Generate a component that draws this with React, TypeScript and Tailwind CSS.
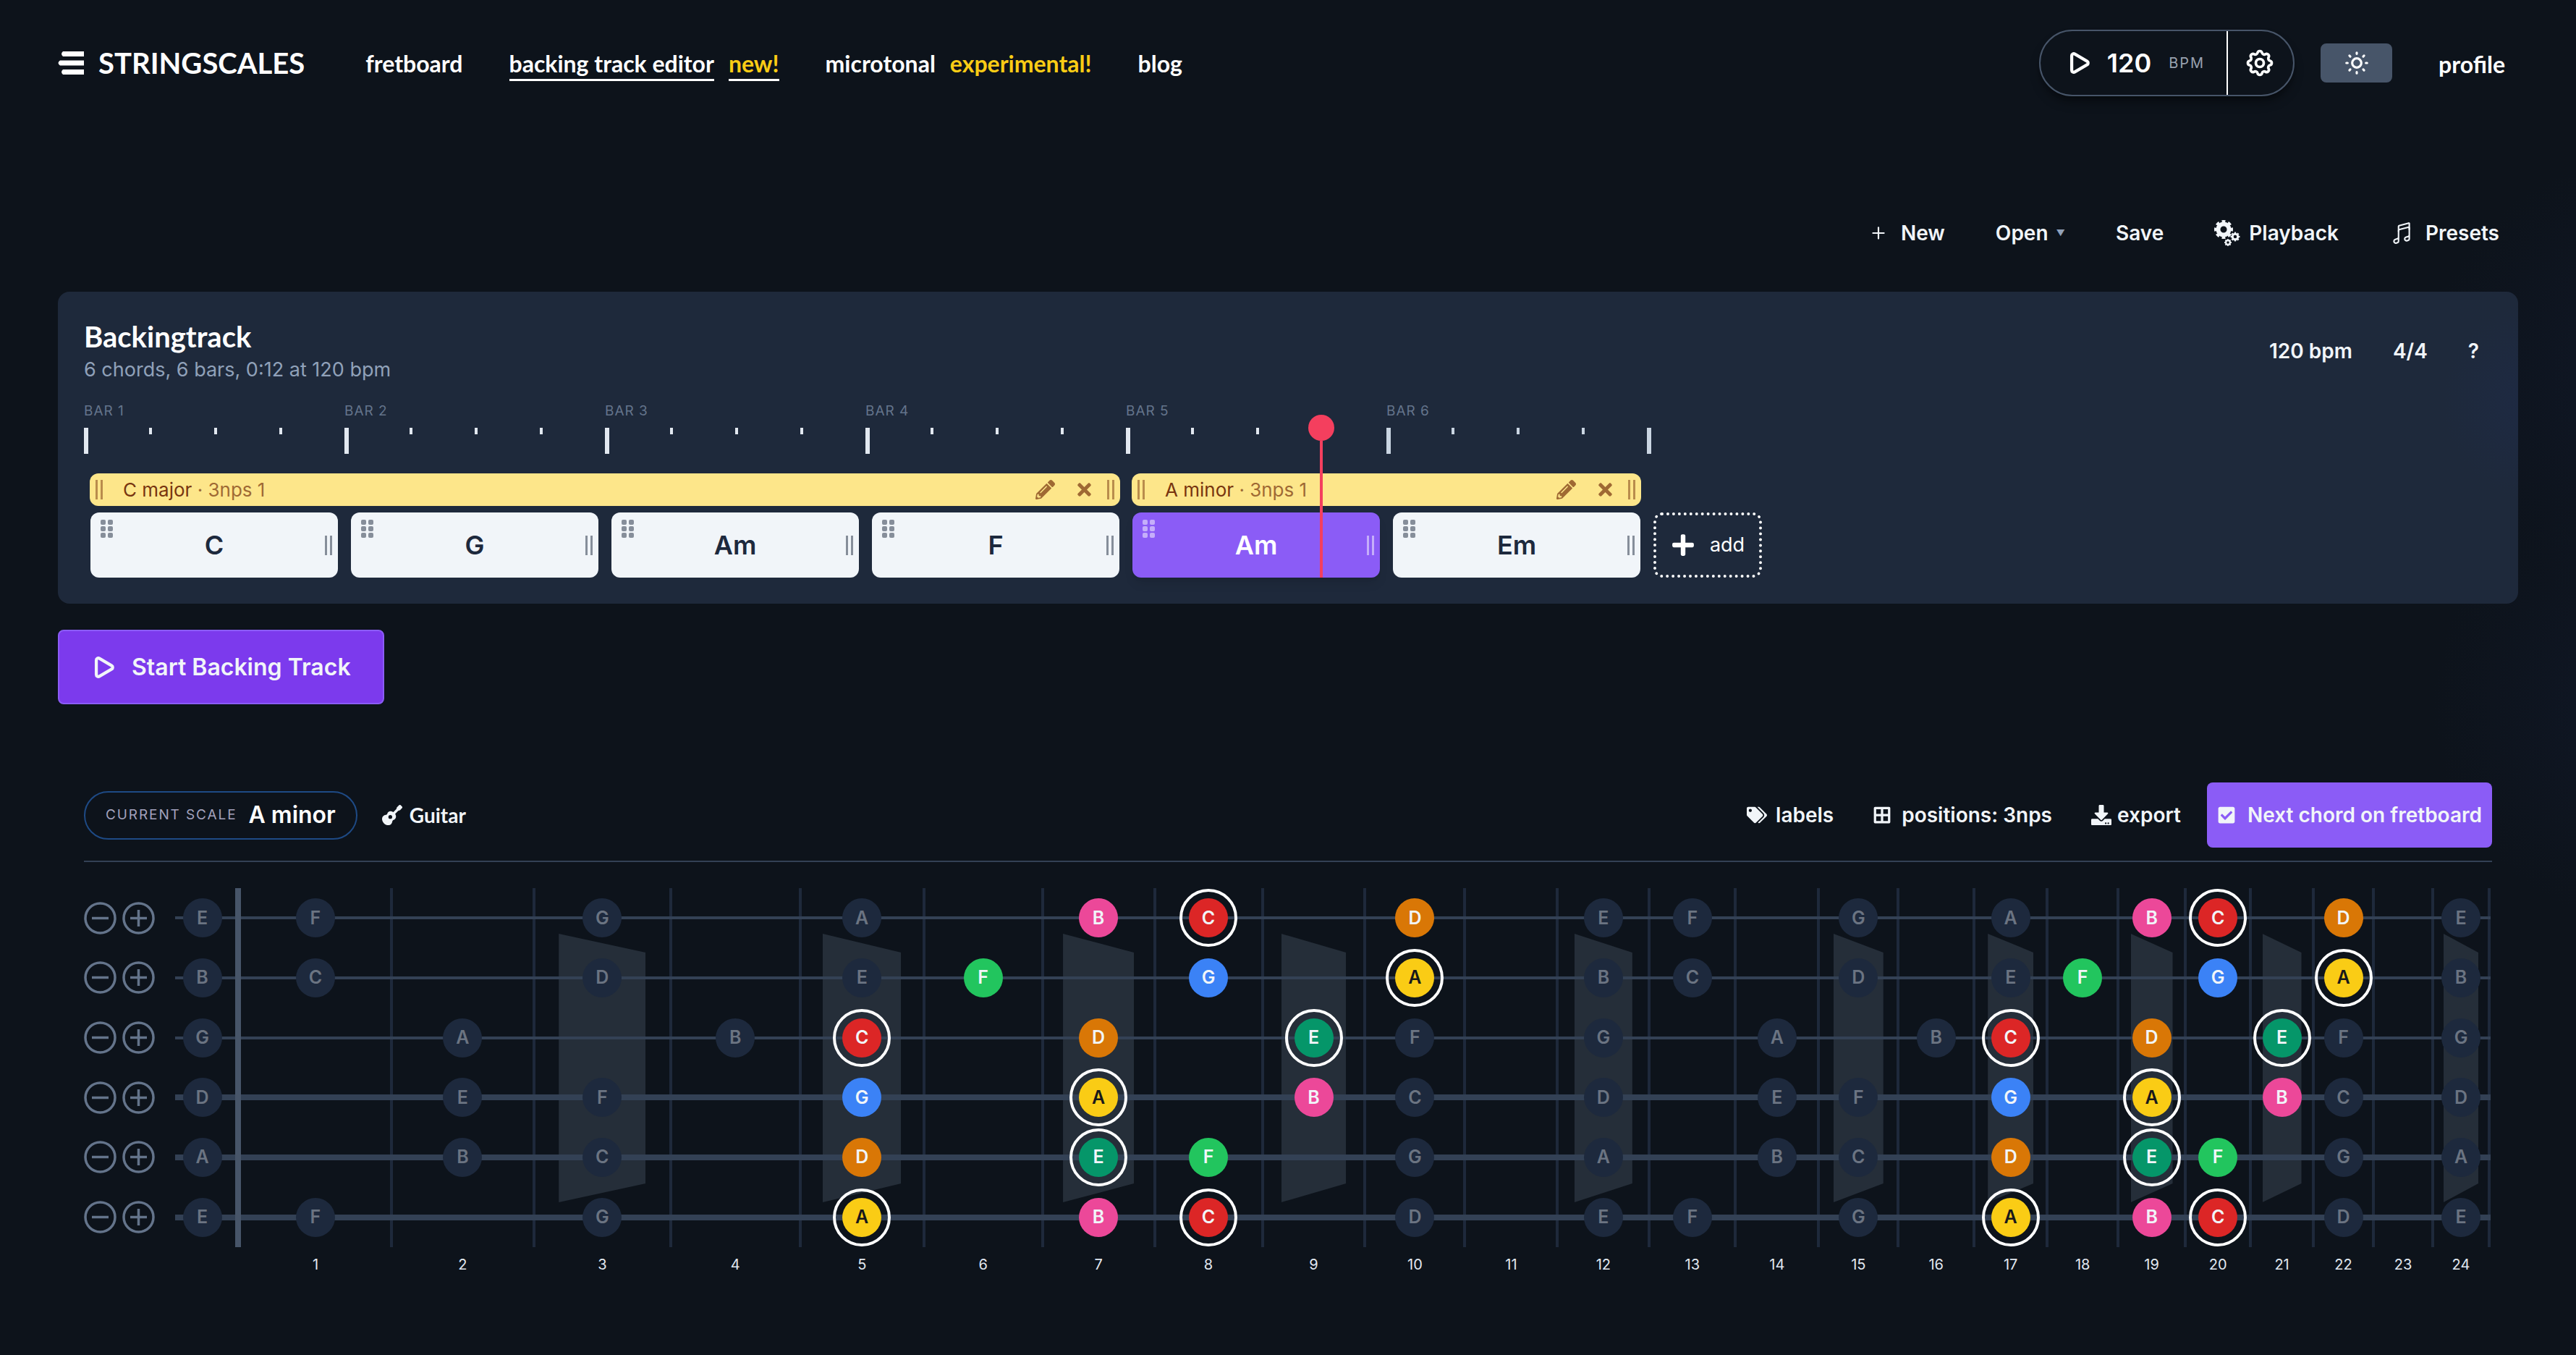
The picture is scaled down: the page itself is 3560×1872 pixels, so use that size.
import { useState } from "react";
import clsx from "clsx";
import { Play, Plus } from "lucide-react";
import {
  FaBorderAll,
  FaCheckSquare,
  FaDownload,
  FaGuitar,
  FaPencilAlt,
  FaPlus,
  FaTags,
  FaTimes,
} from "react-icons/fa";
import { HiOutlineCog, HiOutlineSun } from "react-icons/hi";
import { IoMusicalNotesOutline } from "react-icons/io5";

const BAR_WIDTH = 360;
const PLAYHEAD_BEAT = 19;

const chords = ["C", "G", "Am", "F", "Am", "Em"];
const activeChord = 4;

const scales = [
  { name: "C major", position: "3nps 1", bars: 4 },
  { name: "A minor", position: "3nps 1", bars: 2 },
];

const noteNames = ["C", "", "D", "", "E", "F", "", "G", "", "A", "", "B"];

const noteColors: Record<string, string> = {
  A: "bg-[#facc15] text-[#18181b]",
  B: "bg-[#ec4899] text-slate-100",
  C: "bg-[#dc2626] text-slate-100",
  D: "bg-[#d97706] text-slate-100",
  E: "bg-[#059669] text-slate-100",
  F: "bg-[#22c55e] text-slate-100",
  G: "bg-[#3b82f6] text-slate-100",
};

// open = semitones above C, active = frets that are part of the position
const strings = [
  { open: 4, thick: false, active: [7, 8, 10, 19, 20, 22] },
  { open: 11, thick: false, active: [6, 8, 10, 18, 20, 22] },
  { open: 7, thick: false, active: [5, 7, 9, 17, 19, 21] },
  { open: 2, thick: true, active: [5, 7, 9, 17, 19, 21] },
  { open: 9, thick: true, active: [5, 7, 8, 17, 19, 20] },
  { open: 4, thick: true, active: [5, 7, 8, 17, 19, 20] },
];

const chordTones = ["A", "C", "E"];
const markers = [3, 5, 7, 9, 12, 15, 17, 19, 21, 24];

const fretWidths = [
  210, 197, 189, 179, 171, 164, 155, 149, 142, 138, 128, 127, 119, 115, 110,
  105, 101, 98, 93, 90, 87, 83, 82, 78,
];

function Logo() {
  return (
    <a href="#" className="flex items-center gap-5 text-[40px] leading-[48px] font-bold">
      <svg width="36" height="32" viewBox="0 0 36 32" fill="currentColor" aria-hidden="true">
        <path d="M7 0H36V7H7Q3 3.500 7 0Z" />
        <path d="M3 12.500H36V19.500H3Q-2 16 3 12.500Z" />
        <path d="M7 25H36V32H7Q3 28.500 7 25Z" />
      </svg>
      STRINGSCALES
    </a>
  );
}

function Header() {
  return (
    <header className="flex items-center pt-[41px] pl-20 pr-[98px] font-['Lato',sans-serif] text-white">
      <Logo />
      <nav className="ml-[84px] flex items-baseline gap-16 pt-1 text-[32px] leading-[42px] font-bold">
        <a href="#">fretboard</a>
        <a href="#" className="flex items-baseline gap-5">
          <span className="border-b-[3px] border-white">backing track editor</span>
          <span className="border-b-[3px] border-white text-[#facc15]">new!</span>
        </a>
        <a href="#" className="flex items-baseline gap-5">
          <span>microtonal</span>
          <span className="text-[#facc15]">experimental!</span>
        </a>
        <a href="#">blog</a>
      </nav>
      <div className="ml-auto flex items-center">
        <div className="flex h-[92px] items-stretch rounded-full border-2 border-[#475569] font-['Inter',sans-serif] shadow-lg shadow-black/40">
          <button className="flex items-center pl-9 pr-[30px]">
            <Play size={34} strokeWidth={3} />
            <span className="ml-[22px] text-[36px] font-semibold">120</span>
            <span className="ml-6 text-xl tracking-widest text-gray-400">BPM</span>
          </button>
          <button
            aria-label="Metronome settings"
            className="flex items-center border-l-2 border-white pr-6 pl-[22px]"
          >
            <HiOutlineCog size={44} />
          </button>
        </div>
        <button
          aria-label="Toggle theme"
          className="ml-9 flex h-[54px] w-[99px] items-center justify-center rounded-lg bg-[#475569]"
        >
          <HiOutlineSun size={38} />
        </button>
        <a href="#" className="ml-16 pt-1 text-[32px] font-bold">
          profile
        </a>
      </div>
    </header>
  );
}

function Gear({ cx, cy, r }: { cx: number; cy: number; r: number }) {
  return (
    <g fill="none" stroke="currentColor">
      <circle cx={cx} cy={cy} r={r * 0.58} strokeWidth={r * 0.46} />
      <circle
        cx={cx}
        cy={cy}
        r={r * 0.88}
        strokeWidth={r * 0.24}
        pathLength={16}
        strokeDasharray="1.100 0.900"
        strokeDashoffset={0.55}
      />
    </g>
  );
}

function GearsIcon() {
  return (
    <svg width="36" height="36" viewBox="0 0 36 36" aria-hidden="true">
      <Gear cx={13} cy={13} r={13} />
      <Gear cx={29} cy={23} r={6.5} />
      <Gear cx={19} cy={31} r={5} />
    </svg>
  );
}

function Toolbar() {
  return (
    <div className="mt-[153px] flex h-[72px] justify-end pr-[106px] text-[28px] font-semibold text-slate-100">
      <button className="flex items-center gap-[18px] px-[35px]">
        <Plus size={26} />
        New
      </button>
      <button className="flex items-center gap-[11px] px-[35px]">
        Open
        <span className="text-[12px] text-slate-400">▼</span>
      </button>
      <button className="px-[35px]">Save</button>
      <button className="flex items-center gap-3 px-[35px]">
        <GearsIcon />
        Playback
      </button>
      <button className="flex items-center gap-4 pl-[35px]">
        <IoMusicalNotesOutline size={34} />
        Presets
      </button>
    </div>
  );
}

function Grip({ className }: { className?: string }) {
  return (
    <span className={clsx("flex h-[27px] gap-1", className)}>
      <span className="w-[3px] bg-current" />
      <span className="w-[3px] bg-current" />
    </span>
  );
}

function DragDots() {
  return (
    <span className="absolute top-[10px] left-[14px] grid grid-cols-2 gap-x-[3px] gap-y-[2px] opacity-50">
      {[0, 1, 2, 3, 4, 5].map((i) => (
        <span key={i} className="size-[7px] rounded-[2px] bg-current" />
      ))}
    </span>
  );
}

function Ruler() {
  return (
    <div className="mt-[25px] flex">
      {chords.map((_, bar) => (
        <div key={bar} className="w-[360px]">
          <div className="text-[19px] leading-6 tracking-wider text-[#64748b]">
            BAR {bar + 1}
          </div>
          <div
            className={clsx(
              "mt-[11px] flex h-9 items-start",
              bar <= activeChord ? "text-slate-200" : "text-slate-300"
            )}
          >
            {[0, 1, 2, 3].map((beat) => (
              <div key={beat} className="h-full w-[90px]">
                <div className={clsx("bg-current", beat === 0 ? "h-9 w-[6px]" : "h-[9px] w-1")} />
              </div>
            ))}
          </div>
        </div>
      ))}
      <div className="h-9 w-[6px] self-end bg-slate-300" />
    </div>
  );
}

function Timeline() {
  return (
    <div className="relative">
      <Ruler />
      <div className="mt-[27px] flex">
        {scales.map((scale) => (
          <div key={scale.name} className="px-2" style={{ width: scale.bars * BAR_WIDTH }}>
            <div className="flex h-[45px] items-center rounded-xl bg-[#fde68a] px-2 text-[26px] text-[#78350f]">
              <Grip className="opacity-50" />
              <span className="ml-7">
                {scale.name} <span className="opacity-70">· {scale.position}</span>
              </span>
              <div className="ml-auto flex items-center opacity-70">
                <button aria-label="Edit scale">
                  <FaPencilAlt size={27} />
                </button>
                <button aria-label="Remove scale" className="ml-[27px]">
                  <FaTimes size={27} />
                </button>
              </div>
              <Grip className="ml-[18px] opacity-50" />
            </div>
          </div>
        ))}
      </div>
      <div className="mt-[9px] flex">
        {chords.map((chord, i) => (
          <div key={i} className="w-[360px] px-[9px]">
            <button
              className={clsx(
                "relative flex h-[90px] w-full items-center justify-center rounded-xl text-[36px] font-semibold",
                i === activeChord
                  ? "bg-[#8b5cf6] text-white shadow-lg"
                  : "bg-slate-100 text-slate-800"
              )}
            >
              <DragDots />
              {chord}
              <Grip className="absolute right-2 opacity-50" />
            </button>
          </div>
        ))}
        <button className="ml-[9px] flex h-[90px] w-[150px] items-center justify-center gap-5 rounded-xl border-4 border-dotted border-white text-[27px] text-white">
          <FaPlus size={34} />
          add
        </button>
      </div>
      <div
        className="absolute top-[17px] bottom-0 flex w-9 -translate-x-1/2 flex-col items-center"
        style={{ left: (PLAYHEAD_BEAT * BAR_WIDTH) / 4 }}
      >
        <div className="size-9 shrink-0 rounded-full bg-[#f43f5e]" />
        <div className="w-1 flex-1 bg-[#f43f5e]" />
      </div>
    </div>
  );
}

function BackingTrack() {
  return (
    <section className="mx-20 mt-[45px] rounded-2xl bg-[#1e293b] bg-[radial-gradient(circle_at_101%_35%,#1e2a44,transparent_4%)] p-9">
      <div className="flex justify-between">
        <div>
          <h1 className="font-['Lato',sans-serif] text-[40px] leading-[52px] font-bold text-white">
            Backingtrack
          </h1>
          <p className="text-[27px] leading-10 text-slate-400">
            6 chords, 6 bars, 0:12 at 120 bpm
          </p>
        </div>
        <div className="mr-[18px] flex h-[92px] items-center gap-14 text-[28px] font-semibold text-slate-100">
          <button>120 bpm</button>
          <button>4/4</button>
          <button aria-label="Help">?</button>
        </div>
      </div>
      <Timeline />
    </section>
  );
}

function TuningButton({ plus }: { plus?: boolean }) {
  return (
    <button aria-label={plus ? "Tune up" : "Tune down"}>
      <svg width="45" height="45" viewBox="0 0 45 45" fill="none" stroke="currentColor" strokeWidth="3.500">
        <circle cx="22.500" cy="22.500" r="20.500" />
        <path d="M11 22.500H34" />
        {plus && <path d="M22.500 11V34" />}
      </svg>
    </button>
  );
}

function Note({ semitone, active }: { semitone: number; active: boolean }) {
  const name = noteNames[semitone % 12];
  if (!name) return null;

  return (
    <span
      className={clsx(
        "relative z-10 flex size-[54px] shrink-0 items-center justify-center rounded-full text-[25px] font-semibold",
        active ? noteColors[name] : "bg-slate-800 text-[#6b7482]",
        active && chordTones.includes(name) && "outline-4 outline-offset-[9px] outline-white"
      )}
    >
      {name}
    </span>
  );
}

function FretColumn({ fret }: { fret: number }) {
  const open = fret === 0;

  return (
    <div>
      <div
        className={clsx(
          "relative grid h-[496px] grid-rows-6",
          open ? "border-r-8 border-[#475569]" : "border-r-4 border-[#1e293b]"
        )}
      >
        {markers.includes(fret) && (
          <div className="absolute inset-x-0 top-[63px] mx-auto h-[371px] w-[65%] bg-[#252e39] [clip-path:polygon(0_0,100%_7%,100%_93%,0_100%)]" />
        )}
        {strings.map((string, i) => (
          <div
            key={i}
            className={clsx("relative flex items-center justify-center", open && "pr-2")}
          >
            <div
              className={clsx(
                "absolute left-0 bg-[#334155]",
                open ? "right-0" : "-right-1",
                string.thick ? "h-2" : "h-1"
              )}
            />
            <Note semitone={string.open + fret} active={string.active.includes(fret)} />
          </div>
        ))}
      </div>
      <div className="mt-3 h-6 pr-1 text-center text-xl leading-6 text-slate-200">
        {!open && fret}
      </div>
    </div>
  );
}

function Fretboard() {
  const columns = "91px " + fretWidths.map((w) => `minmax(0, ${w}fr)`).join(" ");

  return (
    <div className="mt-9 flex gap-7 pr-[2px]">
      <div className="grid h-[496px] grid-rows-6 text-[#64748b]">
        {strings.map((_, i) => (
          <div key={i} className="flex items-center gap-2">
            <TuningButton />
            <TuningButton plus />
          </div>
        ))}
      </div>
      <div className="grid flex-1" style={{ gridTemplateColumns: columns }}>
        {[0, ...fretWidths].map((_, fret) => (
          <FretColumn key={fret} fret={fret} />
        ))}
      </div>
    </div>
  );
}

function ScaleSection() {
  const [showNext, setShowNext] = useState(true);

  return (
    <section className="mx-[116px] mt-[108px]">
      <div className="flex h-[110px] items-start border-b-2 border-[#334155]">
        <div className="flex h-[90px] items-center text-[28px] font-semibold text-slate-100">
          <button className="flex h-[67px] items-center gap-4 rounded-full border-2 border-[#1e4a85] px-7">
            <span className="text-[19px] font-normal tracking-widest text-[#a3a2bd]">
              CURRENT SCALE
            </span>
            <span className="text-[32px] text-white">A minor</span>
          </button>
          <button className="ml-[34px] flex items-center gap-[10px] font-['Lato',sans-serif] font-bold">
            <FaGuitar size={28} />
            Guitar
          </button>
        </div>
        <div className="ml-auto flex h-[90px] items-center text-[28px] font-semibold text-slate-100">
          <button className="flex items-center gap-3">
            <FaTags size={28} />
            labels
          </button>
          <button className="ml-[54px] flex items-center gap-[14px]">
            <FaBorderAll size={26} />
            positions: 3nps
          </button>
          <button className="ml-[54px] flex items-center gap-2">
            <FaDownload size={28} />
            export
          </button>
          <button
            aria-pressed={showNext}
            onClick={() => setShowNext(!showNext)}
            className="ml-9 flex h-full items-center gap-4 rounded-lg bg-[#8b5cf6] px-[14px]"
          >
            <FaCheckSquare size={26} />
            Next chord on fretboard
          </button>
        </div>
      </div>
      <Fretboard />
    </section>
  );
}

export default function App() {
  return (
    <main className="min-h-screen w-full bg-[#0d131b] bg-[radial-gradient(circle_at_103%_28%,#101726,transparent_8%),radial-gradient(circle_at_103%_52%,#101726,transparent_8%)] font-['Inter',sans-serif]">
      <Header />
      <Toolbar />
      <BackingTrack />
      <button className="mt-9 ml-20 flex h-[103px] items-center gap-[22px] rounded-lg border-2 border-[#8b5cf6] bg-[#7c3aed] px-11 text-[32px] font-semibold text-slate-100">
        <Play size={34} strokeWidth={3} />
        Start Backing Track
      </button>
      <ScaleSection />
    </main>
  );
}
